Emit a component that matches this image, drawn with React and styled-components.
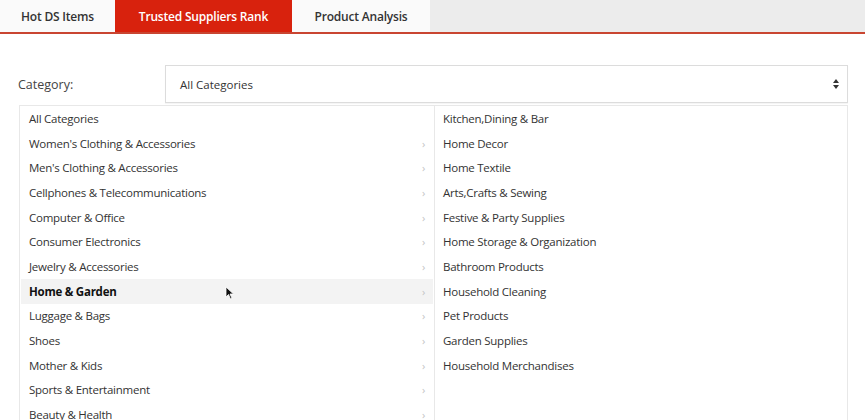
import React from "react";
import styled, { createGlobalStyle } from "styled-components";

const leftItems = [
  { name: "All Categories", arrow: false },
  { name: "Women's Clothing & Accessories", arrow: true },
  { name: "Men's Clothing & Accessories", arrow: true },
  { name: "Cellphones & Telecommunications", arrow: true },
  { name: "Computer & Office", arrow: true },
  { name: "Consumer Electronics", arrow: true },
  { name: "Jewelry & Accessories", arrow: true },
  { name: "Home & Garden", arrow: true, active: true },
  { name: "Luggage & Bags", arrow: true },
  { name: "Shoes", arrow: true },
  { name: "Mother & Kids", arrow: true },
  { name: "Sports & Entertainment", arrow: true },
  { name: "Beauty & Health", arrow: true },
];

const rightItems = [
  "Kitchen,Dining & Bar",
  "Home Decor",
  "Home Textile",
  "Arts,Crafts & Sewing",
  "Festive & Party Supplies",
  "Home Storage & Organization",
  "Bathroom Products",
  "Household Cleaning",
  "Pet Products",
  "Garden Supplies",
  "Household Merchandises",
];

const App = () => {
  return (
    <Page>
      <GlobalStyle />
      <TabBar>
        <Tab>Hot DS Items</Tab>
        <Tab $active>Trusted Suppliers Rank</Tab>
        <Tab>Product Analysis</Tab>
      </TabBar>

      <FilterRow>
        <Label>Category:</Label>
        <Select>
          <span>All Categories</span>
          <svg width="8" height="12" viewBox="0 0 8 12">
            <path d="M4 1 L7 5 H1 Z" fill="#333" />
            <path d="M4 11 L7 7 H1 Z" fill="#333" />
          </svg>
        </Select>
      </FilterRow>

      <Panel>
        <Column $left>
          {leftItems.map((item) => (
            <Row key={item.name} $active={item.active} $left>
              <span>{item.name}</span>
              {item.arrow && <Chevron>›</Chevron>}
              {item.active && (
                <Cursor width="10" height="14" viewBox="0 0 10 14">
                  <path d="M1 1 L1 11 L3.5 8.5 L5.5 13 L7 12.3 L5 8 L8.5 8 Z" fill="#111" stroke="#fff" strokeWidth="0.8" />
                </Cursor>
              )}
            </Row>
          ))}
        </Column>
        <Column>
          {rightItems.map((name) => (
            <Row key={name}>
              <span>{name}</span>
            </Row>
          ))}
        </Column>
      </Panel>
    </Page>
  );
};

export default App;

const GlobalStyle = createGlobalStyle`
  body {
    margin: 0;
    background: #fff;
    font-family: "Open Sans", "Liberation Sans", sans-serif;
    color: #333;
  }
`;

const Page = styled.div`
  width: 865px;
  height: 420px;
  overflow: hidden;
  background: #fff;
`;

const TabBar = styled.div`
  display: flex;
  height: 32px;
  background: #ececec;
  border-bottom: 2px solid #c94531;
`;

const Tab = styled.div`
  display: flex;
  align-items: center;
  justify-content: center;
  padding: 0 20px;
  font-size: 12px;
  font-weight: 600;
  letter-spacing: -0.2px;
  background: ${(p) => (p.$active ? "#d8220d" : "#fafafa")};
  color: ${(p) => (p.$active ? "#fff" : "#333")};
  &:first-child {
    padding: 0 18px 0 18px;
    width: 79px;
  }
  &:nth-child(2) {
    width: 137px;
  }
  &:nth-child(3) {
    width: 98px;
  }
`;

const FilterRow = styled.div`
  display: flex;
  align-items: center;
  padding: 31px 17px 0 18px;
`;

const Label = styled.div`
  width: 147px;
  font-size: 12.5px;
  color: #444;
`;

const Select = styled.div`
  flex: 1;
  height: 36px;
  display: flex;
  align-items: center;
  justify-content: space-between;
  padding: 0 7px 0 14px;
  border: 1px solid #dcdcdc;
  font-size: 11.5px;
  color: #333;
  box-shadow: 0 1px 1px rgba(0, 0, 0, 0.04);
`;

const Panel = styled.div`
  display: grid;
  grid-template-columns: 415px 1fr;
  margin: 2px 17px 0 19px;
  border: 1px solid #e8e8e8;
  border-bottom: none;
  height: 322px;
`;

const Column = styled.div`
  display: flex;
  flex-direction: column;
  border-right: ${(p) => (p.$left ? "1px solid #e8e8e8" : "none")};
  padding: ${(p) => (p.$left ? "0 1px 0 1px" : "0 0 0 8px")};
`;

const Row = styled.div`
  position: relative;
  height: 24.7px;
  flex-shrink: 0;
  display: flex;
  align-items: center;
  justify-content: space-between;
  padding: ${(p) => (p.$left ? "0 8px 0 8px" : "0")};
  font-size: 11.5px;
  letter-spacing: -0.25px;
  font-weight: ${(p) => (p.$active ? 700 : 400)};
  color: ${(p) => (p.$active ? "#111" : "#333")};
  background: ${(p) => (p.$active ? "#f3f3f3" : "transparent")};
`;

const Chevron = styled.span`
  font-size: 11px;
  color: #c4c4c4;
  font-weight: 400;
`;

const Cursor = styled.svg`
  position: absolute;
  left: 204px;
  top: 7px;
`;
